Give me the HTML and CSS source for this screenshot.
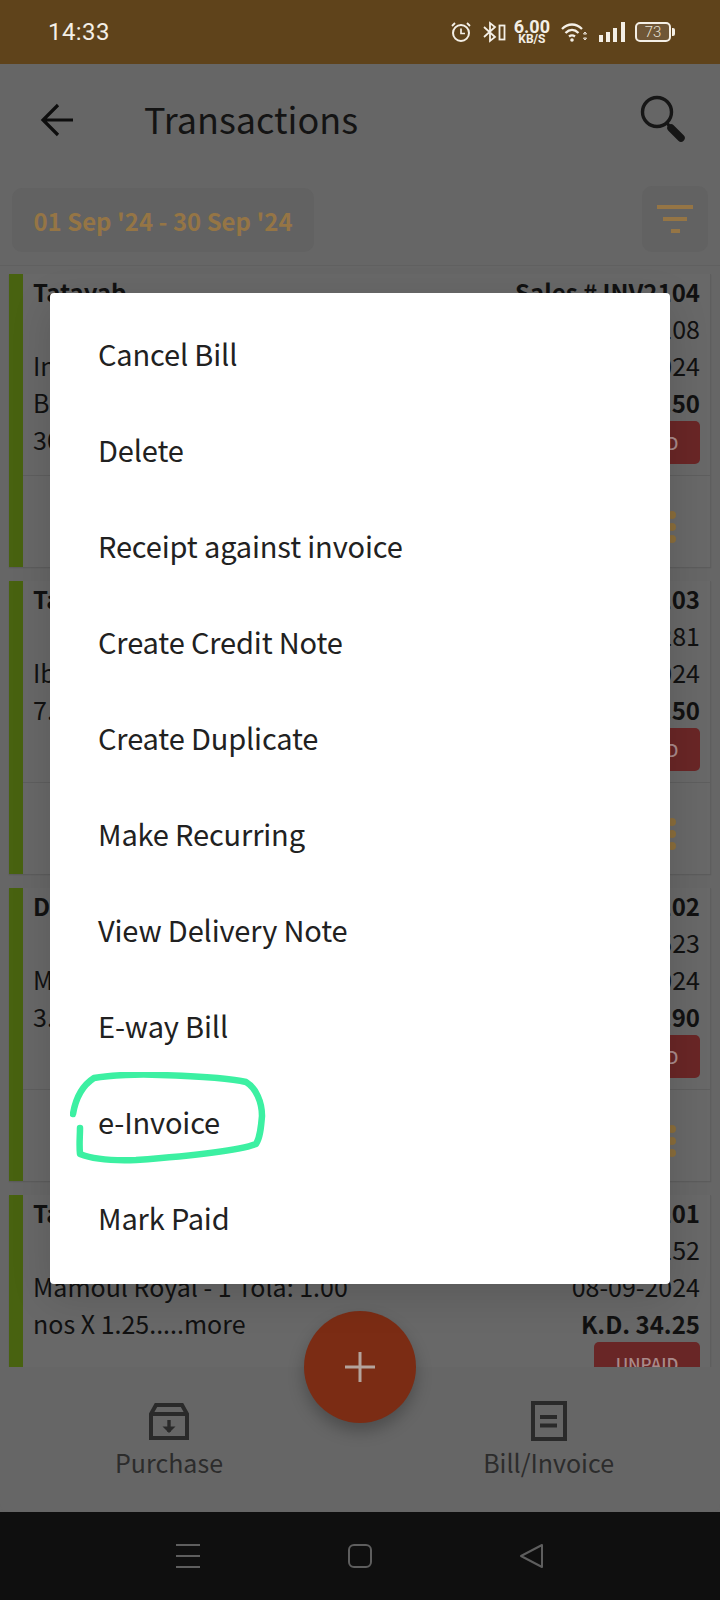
FILE: index.html
```html
<!DOCTYPE html>
<html lang="en">
<head>
<meta charset="utf-8">
<title>Transactions</title>
<link rel="stylesheet" href="styles.css">
</head>
<body>
<div class="phone">
  <div class="status">
    <span class="time">14:33</span>
    <div class="status-icons">
      <svg class="si alarm" width="22" height="22" viewBox="0 0 22 22" fill="none" stroke="#f4efe6" stroke-width="2"><circle cx="11" cy="12" r="8"/><path d="M11 7.5V12.5H15" stroke-width="1.7"/><path d="M2 5L5 2M20 5L17 2" stroke-width="1.8"/></svg>
      <svg class="si bt" width="24" height="22" viewBox="0 0 24 22" fill="none" stroke="#f4efe6" stroke-width="1.8"><path d="M2 6L13 16L8 20V2L13 6L2 16"/><rect x="17.5" y="4.5" width="5" height="14"/></svg>
      <div class="speed"><span class="speed-num">6.00</span><span class="speed-unit">KB/S</span></div>
      <svg class="si wifi" width="27" height="22" viewBox="0 0 27 22" fill="none" stroke="#f4efe6" stroke-width="2.3"><path d="M1 8C7 2 15 2 21 8"/><path d="M4.500 12C8.500 8 13.500 8 17.500 12"/><path d="M8 15.500C10 14 12 14 14 15.500"/><circle cx="11" cy="19" r="1.800" fill="#f4efe6" stroke="none"/><path d="M24 11L22.500 13H25.500ZM24 19L22.500 17H25.500Z" stroke-width="1"/></svg>
      <svg class="si sig" width="27" height="22" viewBox="0 0 27 22" fill="#f4efe6"><rect x="0" y="14" width="4" height="7"/><rect x="7" y="11" width="4" height="10"/><rect x="14" y="7" width="4" height="14"/><rect x="22" y="1" width="4" height="20"/></svg>
      <div class="battery"><span class="battery-num">73</span></div>
    </div>
  </div>

  <div class="app">
    <header class="appbar">
      <svg class="back" width="36" height="36" viewBox="0 0 36 36" fill="none" stroke="#0d0d0d" stroke-width="3.200"><path d="M34 18H4M19 3L4 18L19 33"/></svg>
      <h1 class="title">Transactions</h1>
      <svg class="search" width="50" height="50" viewBox="0 0 50 50" fill="none" stroke="#161616"><circle cx="19" cy="17" r="14.500" stroke-width="3.400"/><path d="M29 28L32 32" stroke-width="3"/><path d="M33 33L43 43" stroke-width="7.500" stroke-linecap="round"/></svg>
    </header>

    <div class="filters">
      <div class="chip">01 Sep '24 - 30 Sep '24</div>
      <div class="filter-btn">
        <span class="fbar fbar-l"></span>
        <span class="fbar fbar-m"></span>
        <span class="fbar fbar-s"></span>
      </div>
    </div>

    <main class="list">
      <article class="card">
        <div class="card-main">
          <div class="col-left"><div class="name">Tatayab</div><div class="desc">Inglot Oud - 1 Tola: 1.00<br>Bakhoor Royal: 2.00 nos X<br>30.00.....more</div></div>
          <div class="col-right"><div class="strong">Sales # INV2104</div><div>Bal: 108</div><div>08-09-2024</div><div class="strong">K.D. 42.50</div><span class="badge">UNPAID</span></div>
        </div>
        <div class="card-foot"><span class="dots"><i></i><i></i><i></i></span></div>
      </article>
      <article class="card">
        <div class="card-main">
          <div class="col-left"><div class="name">Tatayab</div><div class="desc">Ibtisam Oud - 1 Tola: 1.00<br>7.50.....more</div></div>
          <div class="col-right"><div class="strong">Sales # INV2103</div><div>Bal: 281</div><div>08-09-2024</div><div class="strong">K.D. 17.50</div><span class="badge">UNPAID</span></div>
        </div>
        <div class="card-foot"><span class="dots"><i></i><i></i><i></i></span></div>
      </article>
      <article class="card">
        <div class="card-main">
          <div class="col-left"><div class="name">Dar Oud</div><div class="desc">Musk Rose - 1 Tola: 1.00<br>3.90.....more</div></div>
          <div class="col-right"><div class="strong">Sales # INV2102</div><div>Bal: 523</div><div>08-09-2024</div><div class="strong">K.D. 13.90</div><span class="badge">UNPAID</span></div>
        </div>
        <div class="card-foot"><span class="dots"><i></i><i></i><i></i></span></div>
      </article>
      <article class="card">
        <div class="card-main">
          <div class="col-left"><div class="name">Tatayab</div><div class="desc">Mamoul Royal - 1 Tola: 1.00<br>nos X 1.25.....more</div></div>
          <div class="col-right"><div class="strong">Sales # INV2101</div><div>Bal: 152</div><div>08-09-2024</div><div class="strong">K.D. 34.25</div><span class="badge">UNPAID</span></div>
        </div>
        <div class="card-foot"><span class="dots"><i></i><i></i><i></i></span></div>
      </article>
    </main>

    <footer class="tabbar">
      <div class="tab">
        <svg width="40" height="40" viewBox="0 0 40 40" fill="none" stroke="#2a2a2a" stroke-width="4"><path d="M2 13L7 4H33L38 13V37H2Z"/><path d="M2 13H38"/><path d="M20 19V31" stroke-width="3.400"/><path d="M13.500 25.500H26.500L20 32Z" fill="#2a2a2a" stroke="none"/></svg>
        <span class="tab-label">Purchase</span>
      </div>
      <div class="tab">
        <svg width="40" height="40" viewBox="0 0 40 40" fill="none" stroke="#2a2a2a" stroke-width="4"><rect x="4" y="2" width="32" height="36"/><path d="M11 16H28M11 24.500H28" stroke-width="4"/></svg>
        <span class="tab-label">Bill/Invoice</span>
      </div>
      <button class="fab" type="button"><svg width="30" height="30" viewBox="0 0 30 30" stroke="#b4a39c" stroke-width="3"><path d="M15 0V30M0 15H30"/></svg></button>
    </footer>

    <div class="scrim">
      <div class="dialog">
        <div class="item">Cancel Bill</div>
        <div class="item">Delete</div>
        <div class="item">Receipt against invoice</div>
        <div class="item">Create Credit Note</div>
        <div class="item">Create Duplicate</div>
        <div class="item">Make Recurring</div>
        <div class="item">View Delivery Note</div>
        <div class="item">E-way Bill</div>
        <div class="item item-marked">e-Invoice
          <svg class="scribble" width="200" height="92" viewBox="0 0 200 92" fill="none" stroke="#3cf0a2" stroke-width="6.500" stroke-linecap="round" stroke-linejoin="round"><path d="M3 42C5 30 10 15 24 6C40 3 70 2 90 3C120 4 160 6 176 10C186 16 192 30 192 44C191 56 190 66 186 72C170 78 120 84 66 88C40 89 20 86 10 82C9 72 10 65 10 56"/></svg>
        </div>
        <div class="item">Mark Paid</div>
      </div>
    </div>
  </div>

  <nav class="sysnav">
    <svg width="26" height="26" viewBox="0 0 26 26" stroke="#5e5e5e" stroke-width="2"><path d="M1 2H25M1 13H25M1 24H25"/></svg>
    <svg width="26" height="26" viewBox="0 0 26 26" fill="none" stroke="#5e5e5e" stroke-width="2"><rect x="2" y="2" width="22" height="22" rx="5"/></svg>
    <svg width="26" height="26" viewBox="0 0 26 26" fill="none" stroke="#5e5e5e" stroke-width="2" stroke-linejoin="round"><path d="M23 2V24L2 13Z"/></svg>
  </nav>
</div>
</body>
</html>
```
FILE: styles.css
```css
* { box-sizing: border-box; }
html, body { margin: 0; padding: 0; }
body {
  width: 720px;
  height: 1600px;
  overflow: hidden;
  font-family: "Noto Sans CJK SC", "Noto Sans", sans-serif;
  background: #666;
}
.phone { width: 720px; height: 1600px; display: flex; flex-direction: column; }

.status {
  height: 64px;
  flex: none;
  background: #5f431b;
  display: flex;
  align-items: center;
  justify-content: space-between;
  padding: 0 49px 0 48px;
}
.time { font-family: Roboto, sans-serif; font-size: 24px; color: #f4efe6; letter-spacing: .4px; }
.status-icons { display: flex; align-items: center; gap: 11px; }
.alarm { margin-right: -1px; }
.bt { margin-right: -3px; }
.speed { display: flex; flex-direction: column; align-items: center; color: #f4efe6; font-family: Roboto, sans-serif; font-weight: 700; line-height: 1; }
.speed-num { font-size: 18px; line-height: 15px; }
.speed-unit { font-size: 12px; line-height: 11px; }
.battery {
  width: 36px;
  height: 20px;
  border: 2px solid #f4efe6;
  border-radius: 5px;
  background: #6f5636;
  display: flex;
  align-items: center;
  justify-content: center;
  position: relative;
  margin-left: -2px;
}
.battery::after {
  content: "";
  position: absolute;
  right: -6px;
  top: 4px;
  width: 3px;
  height: 8px;
  background: #f4efe6;
  border-radius: 0 2px 2px 0;
}
.battery-num { font-family: Roboto, sans-serif; font-size: 15px; color: #e9e2d6; font-weight: 300; line-height: 1; }

.app { flex: 1; min-height: 0; display: flex; flex-direction: column; position: relative; background: #666; }

.appbar { height: 112px; flex: none; display: flex; align-items: center; padding: 0 32px 0 39px; }
.back { flex: none; }
.title { margin: 0 0 4px 69px; font-size: 36px; font-weight: 400; color: #141414; flex: 1; line-height: 1; }
.search { flex: none; }

.filters { height: 90px; flex: none; display: flex; justify-content: space-between; padding: 12px 12px 0; border-bottom: 1px solid #606060; }
.chip {
  width: 302px;
  height: 64px;
  background: #626262;
  border-radius: 10px;
  color: #957545;
  font-size: 24px;
  font-weight: 700;
  display: flex;
  align-items: center;
  justify-content: center;
}
.filter-btn {
  width: 66px;
  height: 66px;
  margin-top: -2px;
  background: #626262;
  border-radius: 10px;
  display: flex;
  flex-direction: column;
  align-items: center;
  justify-content: center;
  gap: 8px;
}
.fbar { display: block; height: 4px; background: #957545; }
.fbar-l { width: 36px; }
.fbar-m { width: 24px; }
.fbar-s { width: 9px; }

.list { flex: 1; min-height: 0; overflow: hidden; padding: 8px 9px 0; display: flex; flex-direction: column; gap: 14px; }
.card {
  flex: none;
  height: 293px;
  border-left: 14px solid #486210;
  border-right: 1px solid #5e5e5e;
  background: #686868;
  box-shadow: 0 1px 1px #5c5c5c;
  color: #111;
  font-size: 25px;
  line-height: 37px;
}
.card-main { height: 202px; padding: 0 10px; display: flex; justify-content: space-between; border-bottom: 1px solid #5e5e5e; }
.col-left, .col-right { margin-top: -1px; }
.col-right { display: flex; flex-direction: column; align-items: flex-end; }
.name { font-weight: 700; font-size: 24px; }
.desc { margin-top: 37px; }
.strong { font-weight: 700; font-size: 24px; }
.badge {
  width: 106px;
  height: 43px;
  background: #692626;
  border-radius: 5px;
  color: #a98a8a;
  font-size: 17px;
  font-weight: 500;
  line-height: 43px;
  text-align: center;
}
.card-foot { height: 90px; display: flex; align-items: center; justify-content: flex-end; padding: 12px 34px 0 0; }
.dots { display: flex; flex-direction: column; gap: 4px; }
.dots i { display: block; width: 8px; height: 8px; border-radius: 50%; background: #8a6d3b; }

.tabbar {
  height: 145px;
  flex: none;
  background: #666;
  display: flex;
  justify-content: space-between;
  padding: 34px 106px 0 115px;
  position: relative;
  border-radius: 0 0 8px 8px;
}
.tab { display: flex; flex-direction: column; align-items: center; }
.tab-label { font-size: 25px; line-height: 36px; color: #2c2c2c; margin-top: 3px; }
.fab {
  position: absolute;
  left: 304px;
  top: -56px;
  width: 112px;
  height: 112px;
  border: 0;
  padding: 0;
  border-radius: 50%;
  background: #7b2c14;
  box-shadow: 0 8px 16px rgba(0,0,0,.25);
  display: flex;
  align-items: center;
  justify-content: center;
}

.scrim { position: absolute; inset: 0; display: flex; align-items: center; justify-content: center; }
.dialog {
  width: 620px;
  height: 991px;
  background: #fff;
  border-radius: 4px;
  padding: 12px 0 19px;
  box-shadow: 0 12px 40px rgba(0,0,0,.14);
}
.item { height: 96px; display: flex; align-items: center; padding-left: 48px; font-size: 29px; letter-spacing: -.15px; color: #212121; position: relative; }
.scribble { position: absolute; left: 20px; top: -1px; }

.sysnav { height: 88px; flex: none; background: #0f0f0f; display: flex; align-items: center; justify-content: center; gap: 146px; }
```
